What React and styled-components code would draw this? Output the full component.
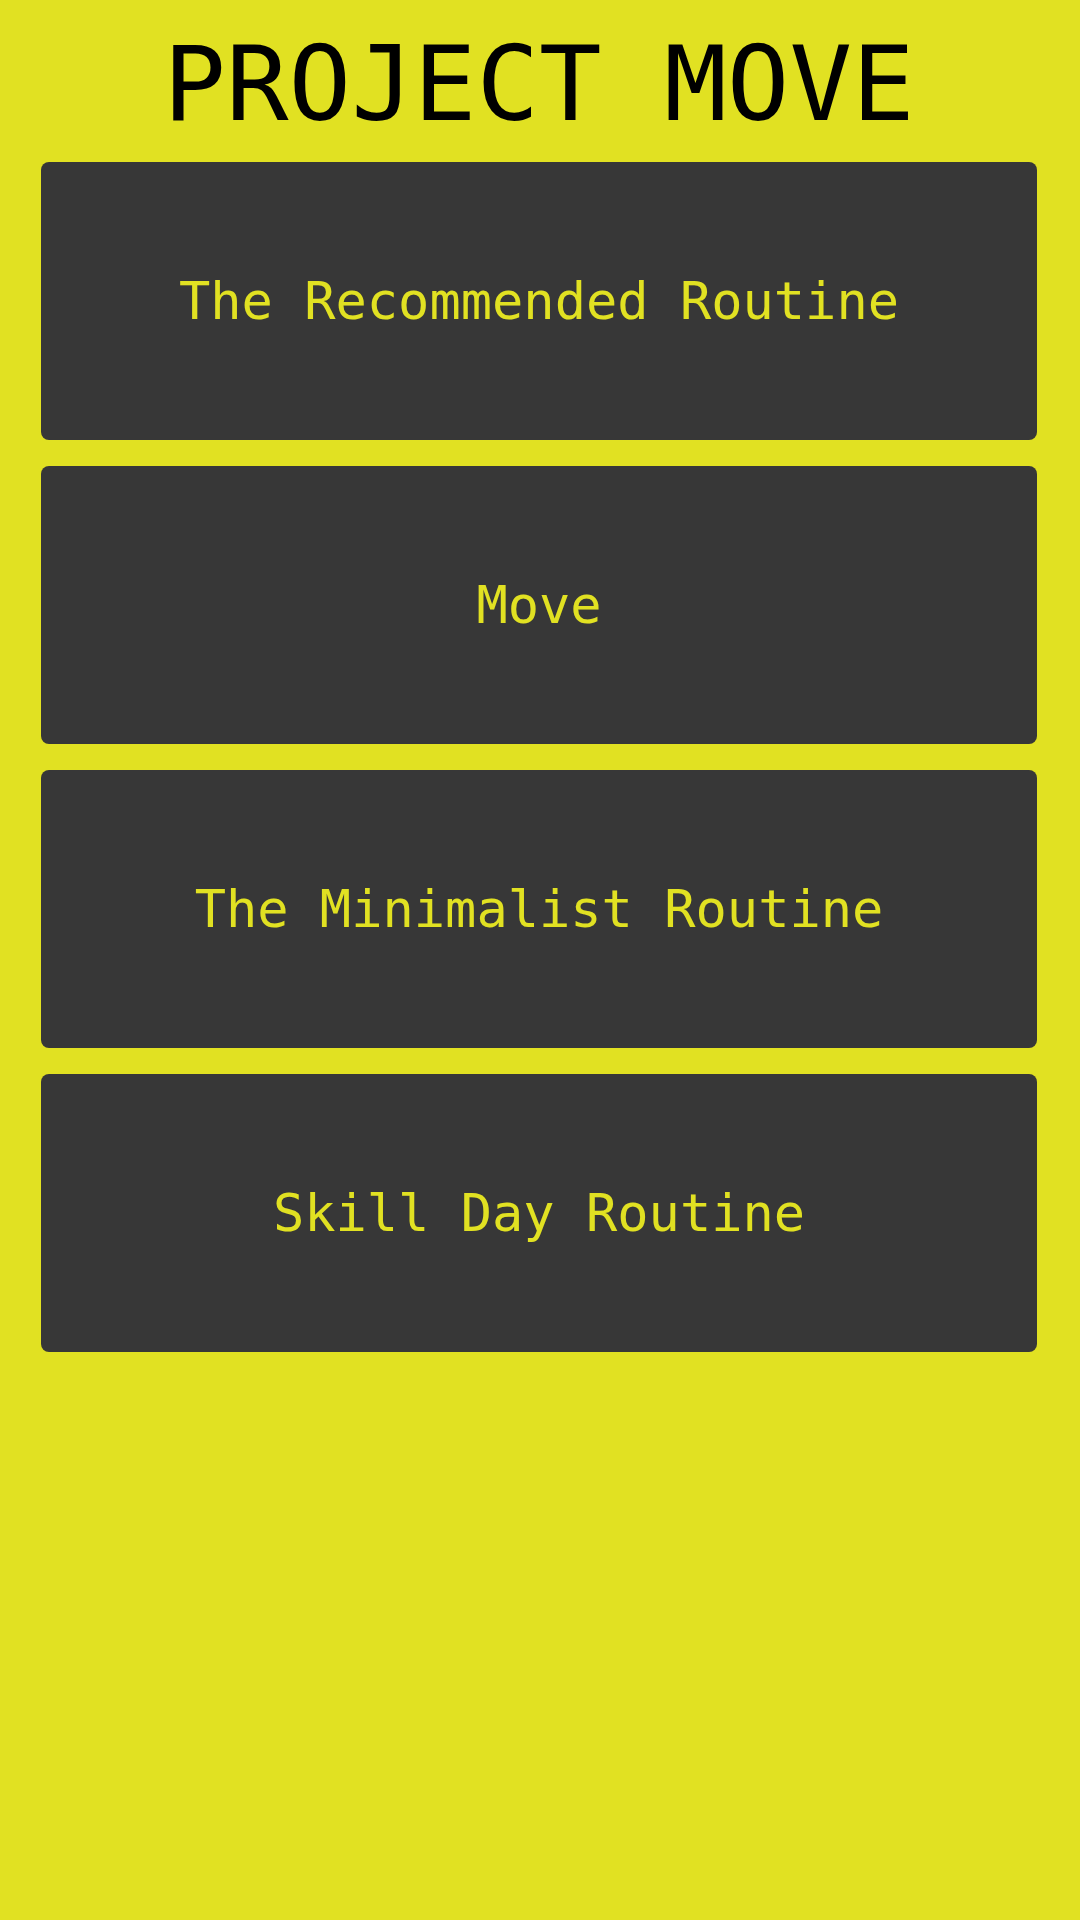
import React from 'react'
import styled, { createGlobalStyle } from 'styled-components'

const yellow = '#e1e122'
const dark = '#373737'

const GlobalStyle = createGlobalStyle`
  html, body {
    margin: 0;
    padding: 0;
    background: ${yellow};
  }
  body {
    font-family: "DejaVu Sans Mono", "Liberation Mono", monospace;
  }
`

const Page = styled.main`
  min-height: 1920px;
  background: ${yellow};
  padding: 24px 43px 0 41px;
  box-sizing: border-box;
`

const Title = styled.h1`
  margin: 0 0 17px 0;
  font-size: 104px;
  line-height: 121px;
  font-weight: 400;
  color: #000;
  text-align: center;
  letter-spacing: 0;
`

const RoutineList = styled.nav`
  display: flex;
  flex-direction: column;
  gap: 26px;
`

const RoutineCard = styled.a`
  display: flex;
  align-items: center;
  justify-content: center;
  height: 278px;
  background: ${dark};
  border-radius: 8px;
  color: ${yellow};
  font-size: 52px;
  text-decoration: none;
  cursor: pointer;
`

const routines = [
  'The Recommended Routine',
  'Move',
  'The Minimalist Routine',
  'Skill Day Routine',
]

function App() {
  return (
    <Page>
      <GlobalStyle />
      <Title>PROJECT MOVE</Title>
      <RoutineList>
        {routines.map(name => (
          <RoutineCard key={name}>{name}</RoutineCard>
        ))}
      </RoutineList>
    </Page>
  )
}

export default App
